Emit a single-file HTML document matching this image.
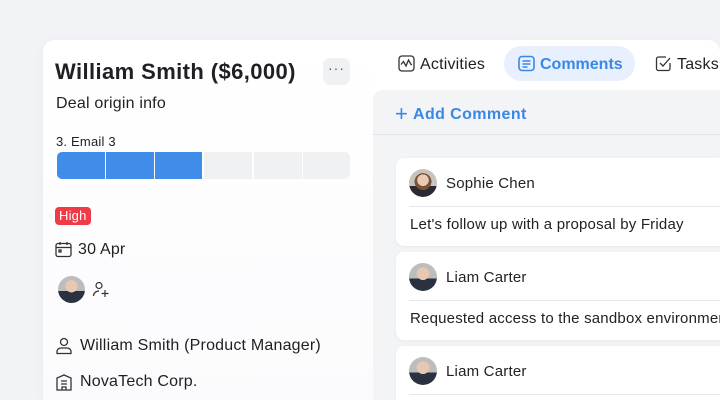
<!DOCTYPE html>
<html><head><meta charset="utf-8"><style>
*{box-sizing:border-box;margin:0;padding:0}
html,body{width:720px;height:400px;overflow:hidden}
body{background:#f2f3f6;font-family:"Liberation Sans","DejaVu Sans",sans-serif;color:#1f1f24;position:relative}
.abs{position:absolute}
.card{left:43px;top:40px;width:677px;height:360px;background:#fff;border-radius:12px 12px 0 0;box-shadow:0 2px 12px rgba(0,0,0,.04)}
.left{left:43px;top:40px;width:330px;height:360px;background:linear-gradient(#fff,#fbfbfd);border-radius:12px 0 0 0}
.t{white-space:nowrap;letter-spacing:.2px}
.seg{position:absolute;top:152px;height:27px;width:48px}
.avatar{border-radius:50%;background:radial-gradient(circle at 50% 38%,#e8c8b0 0 28%,transparent 29%),linear-gradient(#bdbdbd 0 55%,#2a3140 56%);overflow:hidden}
.avatarF{border-radius:50%;background:radial-gradient(circle at 50% 40%,#eacab4 0 26%,transparent 27%),radial-gradient(circle at 50% 45%,#7a5238 0 40%,transparent 41%),linear-gradient(#c9c3bd 0 60%,#2a2a30 61%)}
.cc{position:absolute;left:396px;width:324px;height:88px;background:#fff;border-radius:8px 0 0 8px;box-shadow:0 1px 4px rgba(0,0,0,.05)}
.cc .name{position:absolute;left:50px;top:17px;font-size:15px;color:#222;letter-spacing:.2px}
.cc .line{position:absolute;left:13px;right:0;top:48px;border-top:1px solid #e6e7ea}
.cc .txt{position:absolute;left:14px;top:58px;font-size:15px;color:#222;white-space:nowrap;letter-spacing:.2px;width:310px;overflow:hidden}
.cc .av{position:absolute;left:13px;top:11px;width:28px;height:28px}
</style></head><body>
<div class="abs card"></div>
<div class="abs left"></div>
<div class="abs t" style="left:55px;top:59px;font-size:22px;font-weight:bold;letter-spacing:.4px">William Smith ($6,000)</div>
<div class="abs" style="left:323px;top:58px;width:27px;height:27px;background:#f0f1f3;border-radius:7px;text-align:center;font-size:14px;line-height:20px;color:#555;letter-spacing:1px">···</div>
<div class="abs t" style="left:56px;top:95px;font-size:16px">Deal origin info</div>
<div class="abs t" style="left:56px;top:134px;font-size:13px">3. Email 3</div>
<div class="seg" style="left:57px;background:#3f8de8;border-radius:5px 0 0 5px"></div>
<div class="seg" style="left:106px;background:#3f8de8"></div>
<div class="seg" style="left:155px;background:#3f8de8;width:47px"></div>
<div class="seg" style="left:204px;background:#f0f1f3"></div>
<div class="seg" style="left:254px;background:#f0f1f3"></div>
<div class="seg" style="left:303px;background:#f0f1f3;border-radius:0 5px 5px 0;width:47px"></div>
<div class="abs t" style="left:55px;top:207px;height:18px;padding:0 4px;background:#ef3b47;color:#fff;border-radius:4px;font-size:13px;line-height:18px">High</div>
<svg class="abs" style="left:55px;top:241px" width="17" height="17" viewBox="0 0 17 17" fill="none" stroke="#333" stroke-width="1.3"><rect x="1" y="2.5" width="15" height="13" rx="2"/><path d="M1 6.5h15M5 1v3M12 1v3"/><rect x="4" y="9" width="2" height="2"/></svg>
<div class="abs t" style="left:78px;top:241px;font-size:16px">30 Apr</div>
<div class="abs avatar" style="left:58px;top:276px;width:27px;height:27px"></div>
<svg class="abs" style="left:92px;top:281px" width="18" height="18" viewBox="0 0 18 18" fill="none" stroke="#333" stroke-width="1.2"><circle cx="7" cy="4.5" r="3"/><path d="M1.5 15c0-3 2.5-5 5.5-5M13 9v7M9.5 12.5h7"/></svg>
<svg class="abs" style="left:55px;top:337px" width="18" height="18" viewBox="0 0 18 18" fill="none" stroke="#333" stroke-width="1.3"><circle cx="9" cy="5" r="3.5"/><path d="M2 16.5v-2c0-2 2-3.5 4-3.5h6c2 0 4 1.5 4 3.5v2z"/></svg>
<div class="abs t" style="left:80px;top:337px;font-size:16px">William Smith (Product Manager)</div>
<svg class="abs" style="left:55px;top:373px" width="18" height="18" viewBox="0 0 18 18" fill="none" stroke="#333" stroke-width="1.3"><path d="M2 17V5l7-3 7 3v12zM6 8h6M6 11h6M7 17v-3h4v3"/></svg>
<div class="abs t" style="left:80px;top:373px;font-size:16px">NovaTech Corp.</div>

<svg class="abs" style="left:398px;top:55px" width="17" height="17" viewBox="0 0 17 17" fill="none" stroke="#333" stroke-width="1.3"><rect x="1" y="1" width="15" height="15" rx="3"/><path d="M3 9.5l2.5-3 2.5 4.5 2.5-6 2.5 4.5h1"/></svg>
<div class="abs t" style="left:420px;top:56px;font-size:16px">Activities</div>
<div class="abs" style="left:504px;top:46px;width:131px;height:35px;background:#e7f0fc;border-radius:18px"></div>
<svg class="abs" style="left:518px;top:55px" width="17" height="17" viewBox="0 0 17 17" fill="none" stroke="#3a87e6" stroke-width="1.6"><rect x="1" y="1.5" width="15" height="14" rx="3"/><path d="M4.5 6h8M4.5 9h8M4.5 12h5"/></svg>
<div class="abs t" style="left:540px;top:56px;font-size:16px;color:#3a87e6;font-weight:bold;letter-spacing:0">Comments</div>
<svg class="abs" style="left:655px;top:55px" width="17" height="17" viewBox="0 0 17 17" fill="none" stroke="#333" stroke-width="1.3"><path d="M15 8v5.5a2 2 0 0 1-2 2H3.5a2 2 0 0 1-2-2V4a2 2 0 0 1 2-2H11"/><path d="M5 8l3 3 7-8"/></svg>
<div class="abs t" style="left:677px;top:56px;font-size:16px;width:43px;overflow:hidden">Tasks</div>

<div class="abs" style="left:373px;top:90px;width:347px;height:310px;background:#f3f4f6;border-radius:10px 0 0 0"></div>
<div class="abs" style="left:373px;top:134px;width:347px;height:1px;background:#e4e5e8"></div>
<div class="abs t" style="left:395px;top:101px;font-size:17px;color:#3a87e6"><span style="font-size:22px;font-weight:300;vertical-align:-2px">+</span> <b style="font-size:16px;letter-spacing:.4px">Add Comment</b></div>

<div class="cc" style="top:158px"><div class="av avatarF"></div><div class="name">Sophie Chen</div><div class="line"></div><div class="txt">Let's follow up with a proposal by Friday</div></div>
<div class="cc" style="top:252px"><div class="av avatar"></div><div class="name">Liam Carter</div><div class="line"></div><div class="txt">Requested access to the sandbox environment</div></div>
<div class="cc" style="top:346px;height:54px;border-radius:8px 0 0 0"><div class="av avatar"></div><div class="name">Liam Carter</div><div class="line"></div></div>
</body></html>
